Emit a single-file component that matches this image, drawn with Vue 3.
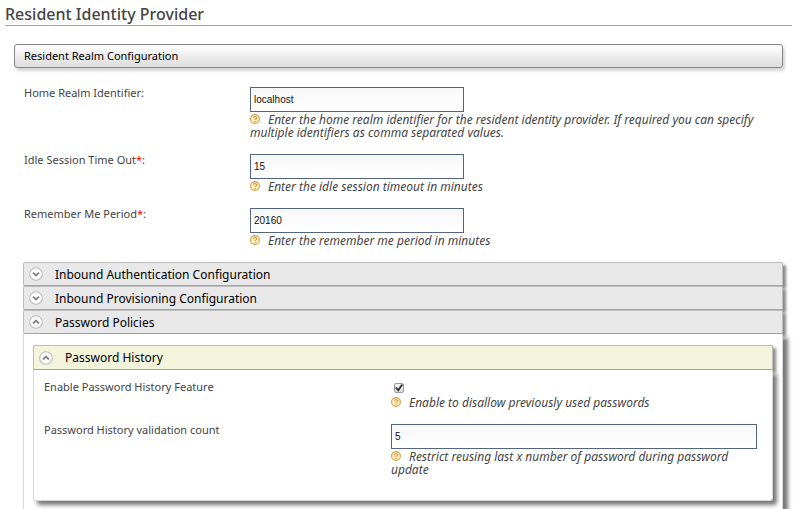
<script setup>
import { ref } from 'vue'

const settings = ref([
  { id: 'realm', label: 'Home Realm Identifier', required: false, value: 'localhost', help: 'Enter the home realm identifier for the resident identity provider. If required you can specify multiple identifiers as comma separated values.' },
  { id: 'idle', label: 'Idle Session Time Out', required: true, value: '15', help: 'Enter the idle session timeout in minutes' },
  { id: 'remember', label: 'Remember Me Period', required: true, value: '20160', help: 'Enter the remember me period in minutes' },
])

const sections = ref([
  { title: 'Inbound Authentication Configuration', open: false },
  { title: 'Inbound Provisioning Configuration', open: false },
  { title: 'Password Policies', open: true },
])

const historyOpen = ref(true)
const historyEnabled = ref(true)
const historyCount = ref('5')
</script>

<template>
  <main class="page">
    <svg class="defs" aria-hidden="true">
      <defs>
        <symbol id="help" viewBox="0 0 10 10">
          <circle cx="5" cy="5" r="4.4" fill="#fdf0c8" stroke="#cf9f45" stroke-width="1.1" />
          <path d="M3.5 4C3.5 2.1 6.6 2.1 6.6 3.9C6.6 5 5.1 4.9 5.1 6.1M5.1 7V8" fill="none" stroke="#e3912b" stroke-width="1.1" />
        </symbol>
        <symbol id="down" viewBox="0 0 14 14">
          <circle cx="7" cy="7" r="6.3" fill="#fff" stroke="#b9b9b9" stroke-width="1.1" />
          <path d="M4 5.6L7 8.5L10 5.6" fill="none" stroke="#858585" stroke-width="1.9" />
        </symbol>
        <symbol id="up" viewBox="0 0 14 14">
          <circle cx="7" cy="7" r="6.3" fill="#fff" stroke="#b9b9b9" stroke-width="1.1" />
          <path d="M4 8.5L7 5.6L10 8.5" fill="none" stroke="#858585" stroke-width="1.9" />
        </symbol>
      </defs>
    </svg>

    <h1 class="title">Resident Identity Provider</h1>

    <div class="content">
      <h2 class="realm-bar">Resident Realm Configuration</h2>

      <div class="body">
        <form class="form" @submit.prevent>
          <div v-for="s in settings" :key="s.id" class="row">
            <label class="label" :for="s.id">{{ s.label }}<span v-if="s.required" class="star">*</span>:</label>
            <div class="field">
              <input :id="s.id" v-model="s.value" class="text" type="text" />
              <p class="help"><svg class="help-icon"><use href="#help" /></svg>{{ s.help }}</p>
            </div>
          </div>
        </form>

        <h2 v-for="s in sections" :key="s.title" class="heading">
          <button class="toggle" type="button" :aria-expanded="s.open" @click="s.open = !s.open">
            <svg class="arrow"><use :href="s.open ? '#up' : '#down'" /></svg>{{ s.title }}
          </button>
        </h2>

        <section v-if="sections[2].open" class="policies">
          <h3 class="heading">
            <button class="toggle inner" type="button" :aria-expanded="historyOpen" @click="historyOpen = !historyOpen">
              <svg class="arrow"><use :href="historyOpen ? '#up' : '#down'" /></svg>Password History
            </button>
          </h3>
          <div v-if="historyOpen" class="history">
            <div class="row wide">
              <label class="label" for="enable">Enable Password History Feature</label>
              <div class="field">
                <input id="enable" v-model="historyEnabled" class="check" type="checkbox" />
                <p class="help"><svg class="help-icon"><use href="#help" /></svg>Enable to disallow previously used passwords</p>
              </div>
            </div>
            <div class="row wide">
              <label class="label" for="count">Password History validation count</label>
              <div class="field">
                <input id="count" v-model="historyCount" class="text full" type="text" />
                <p class="help"><svg class="help-icon"><use href="#help" /></svg>Restrict reusing last x number of password during password update</p>
              </div>
            </div>
          </div>
        </section>
      </div>
    </div>
  </main>
</template>

<style>
body {
  background: #fff;
}
</style>

<style scoped>
.page {
  display: flex;
  flex-direction: column;
  height: 100vh;
  overflow: hidden;
  box-sizing: border-box;
  padding-left: 5px;
  font: 11px/13px "Lucida Grande", "Noto Sans", sans-serif;
  color: #444;
}
.defs {
  position: absolute;
  width: 0;
  height: 0;
}
.title {
  flex: none;
  margin: 0 4px 0 0;
  padding: 4px 0 1px;
  border-bottom: 1px solid #91a5c9;
  font-size: 16px;
  line-height: 20px;
  font-weight: 500;
  color: #444;
}
.content {
  flex: 1;
  display: flex;
  flex-direction: column;
  padding: 18px 13px 0 9px;
}
.realm-bar {
  margin: 0;
  padding: 0 9px;
  border: 1px solid #858585;
  border-radius: 3px;
  background: linear-gradient(#fff, #dcdcdc);
  box-shadow: 2px 3px 3px #d5d5d5;
  font-size: 11px;
  line-height: 22px;
  font-weight: 400;
  color: #000;
}
.body {
  flex: 1;
  display: flex;
  flex-direction: column;
  padding: 19px 0 0 9px;
}
.row {
  display: grid;
  grid-template-columns: 226px 1fr;
  padding: 0 20px 15px 1px;
}
.label {
  line-height: 11px;
}
.star {
  color: #f00;
}
.field {
  min-width: 0;
}
.text {
  display: block;
  box-sizing: border-box;
  width: 214px;
  max-width: 100%;
  height: 25px;
  margin: 0 0 1px;
  padding: 0 3px;
  border: 1px solid #51657f;
  border-radius: 0;
  background: linear-gradient(#f7f7f7, #fff);
  font: 10px "Liberation Sans", sans-serif;
  color: #111;
}
.full {
  width: 100%;
}
.help {
  margin: 0;
  font-size: 12px;
  font-style: italic;
}
.help-icon {
  width: 10px;
  height: 10px;
  margin-right: 8px;
  vertical-align: 0;
}
.heading {
  margin: 0;
  font: inherit;
}
.toggle {
  display: flex;
  align-items: center;
  gap: 12px;
  box-sizing: border-box;
  width: 100%;
  height: 24px;
  padding: 0 5px;
  border: 1px solid #bdbdbd;
  border-bottom-color: #8fa4ce;
  border-radius: 2px;
  background: #e8e8e8;
  box-shadow: 3px 3px 3px #888;
  font: inherit;
  font-size: 12px;
  color: #000;
}
.arrow {
  width: 14px;
  height: 14px;
}
.inner {
  height: 25px;
  border-radius: 0;
  background: #f4f4dc;
}
.policies {
  flex: 1;
  padding: 11px 9px 9px;
  border: solid #d8d8d8;
  border-width: 0 1px;
  background: #fff;
  background-clip: padding-box;
  box-shadow: 5px 4px 4px #777;
}
.history {
  padding: 11px 0 9px;
  border: 1px solid #d8d8d8;
  border-top: 0;
  border-radius: 0 0 3px 3px;
  background: #fff;
  box-shadow: 4px 4px 4px #777;
}
.wide {
  grid-template-columns: 347px 1fr;
  padding: 0 15px 15px 10px;
}
.wide .help {
  padding-right: 20px;
}
.check {
  appearance: none;
  display: grid;
  place-items: center;
  box-sizing: border-box;
  width: 10px;
  height: 10px;
  margin: 2px 0 3px 3px;
  border: 1px solid #999;
  border-radius: 2px;
  background: linear-gradient(#f5f5f5, #ddd);
}
.check:checked::after {
  content: "";
  width: 8px;
  height: 8px;
  background: #333;
  clip-path: polygon(0 50%, 18% 36%, 38% 58%, 82% 0, 100% 14%, 42% 96%);
}
</style>
